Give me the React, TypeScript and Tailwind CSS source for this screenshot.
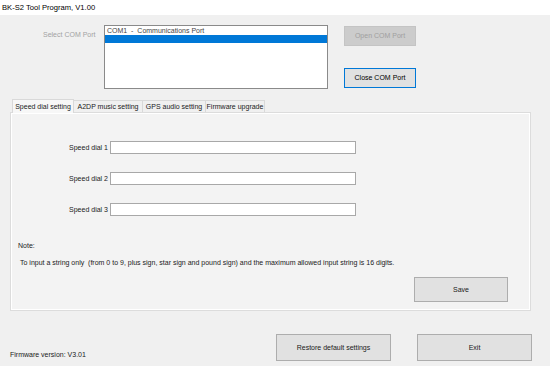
const tabs = ["Speed dial setting", "A2DP music setting", "GPS audio setting", "Firmware upgrade"];

function Tabs() {
  return (
    <div className="flex h-[12px] pl-[12px] items-end">
      <div className="h-[14px] w-[62px] -mb-px z-10 bg-[#f7f7f7] border border-b-0 border-[#d9d9d9] flex items-center justify-center">
        {tabs[0]}
      </div>
      <div className="h-[12px] w-[69px] border-t border-r border-[#d9d9d9] flex items-center justify-center">{tabs[1]}</div>
      <div className="h-[12px] w-[63px] border-t border-r border-[#d9d9d9] flex items-center justify-center">{tabs[2]}</div>
      <div className="h-[12px] w-[59px] border-t border-r border-[#d9d9d9] flex items-center justify-center">{tabs[3]}</div>
    </div>
  );
}

function DialRow({ n }: { n: number }) {
  return (
    <div className="flex items-center h-[13px]">
      <div className="w-[99px] text-right pr-[2px]">Speed dial {n}</div>
      <div className="w-[246px] h-[13px] bg-white border border-[#a8a8a8]" />
    </div>
  );
}

function WinButton({ label, className }: { label: string; className: string }) {
  return (
    <div className={"flex items-center justify-center bg-[#e1e1e1] border border-[#adadad] " + className}>
      {label}
    </div>
  );
}

export default function App() {
  return (
    <div className="w-[550px] h-[366px] bg-[#f0f0f0] overflow-hidden flex flex-col text-[7px] leading-[8px] text-[#1a1a1a] font-['Liberation_Sans',Arial,sans-serif]">
      {/* title bar */}
      <div className="h-[15px] shrink-0 bg-white flex items-center pl-[2px] text-[7.6px] text-black">
        BK-S2 Tool Program, V1.00
      </div>

      {/* COM port section */}
      <div className="flex h-[85px] shrink-0">
        <div className="w-[104px] pl-[43px] pt-[16px] text-[#a3a3a3]">Select COM Port</div>
        <div className="mt-[10px] w-[224px] h-[64px] bg-white border border-[#8a8a8a] pt-[1px]">
          <div className="h-[8px] pl-[2px] text-[#444]">COM1&nbsp; -&nbsp; Communications Port</div>
          <div className="h-[8px] bg-[#0078d7]" />
        </div>
        <div className="ml-[16px] mt-[11px] flex flex-col gap-[22px]">
          <div className="w-[72px] h-[20px] flex items-center justify-center bg-[#cccccc] border border-[#c4c4c4] text-[#a0a0a0]">
            Open COM Port
          </div>
          <div className="w-[72px] h-[20px] flex items-center justify-center bg-[#e1e1e1] border border-[#0078d7] text-black">
            Close COM Port
          </div>
        </div>
      </div>

      <Tabs />

      {/* tab page */}
      <div className="ml-[10px] w-[521px] h-[199px] shrink-0 bg-[#f3f3f3] border border-[#dcdcdc] shadow-[inset_0_0_0_1px_#ffffff] flex flex-col">
        <div className="pt-[28px] flex flex-col gap-[18px]">
          <DialRow n={1} />
          <DialRow n={2} />
          <DialRow n={3} />
        </div>
        <div className="pl-[7px] mt-[26px]">Note:</div>
        <div className="pl-[9px] mt-[9px]">
          To input a string only&nbsp; (from 0 to 9, plus sign, star sign and pound sign) and the maximum allowed input string is 16 digits.
        </div>
        <div className="flex justify-end pr-[22px] mt-[10px]">
          <WinButton label="Save" className="w-[94px] h-[25px]" />
        </div>
      </div>

      {/* bottom bar */}
      <div className="flex items-start pt-[23px]">
        <div className="w-[276px] pl-[10px] pt-[17px]">Firmware version: V3.01</div>
        <WinButton label="Restore default settings" className="w-[115px] h-[27px]" />
        <WinButton label="Exit" className="ml-[26px] w-[115px] h-[27px]" />
      </div>
    </div>
  );
}
